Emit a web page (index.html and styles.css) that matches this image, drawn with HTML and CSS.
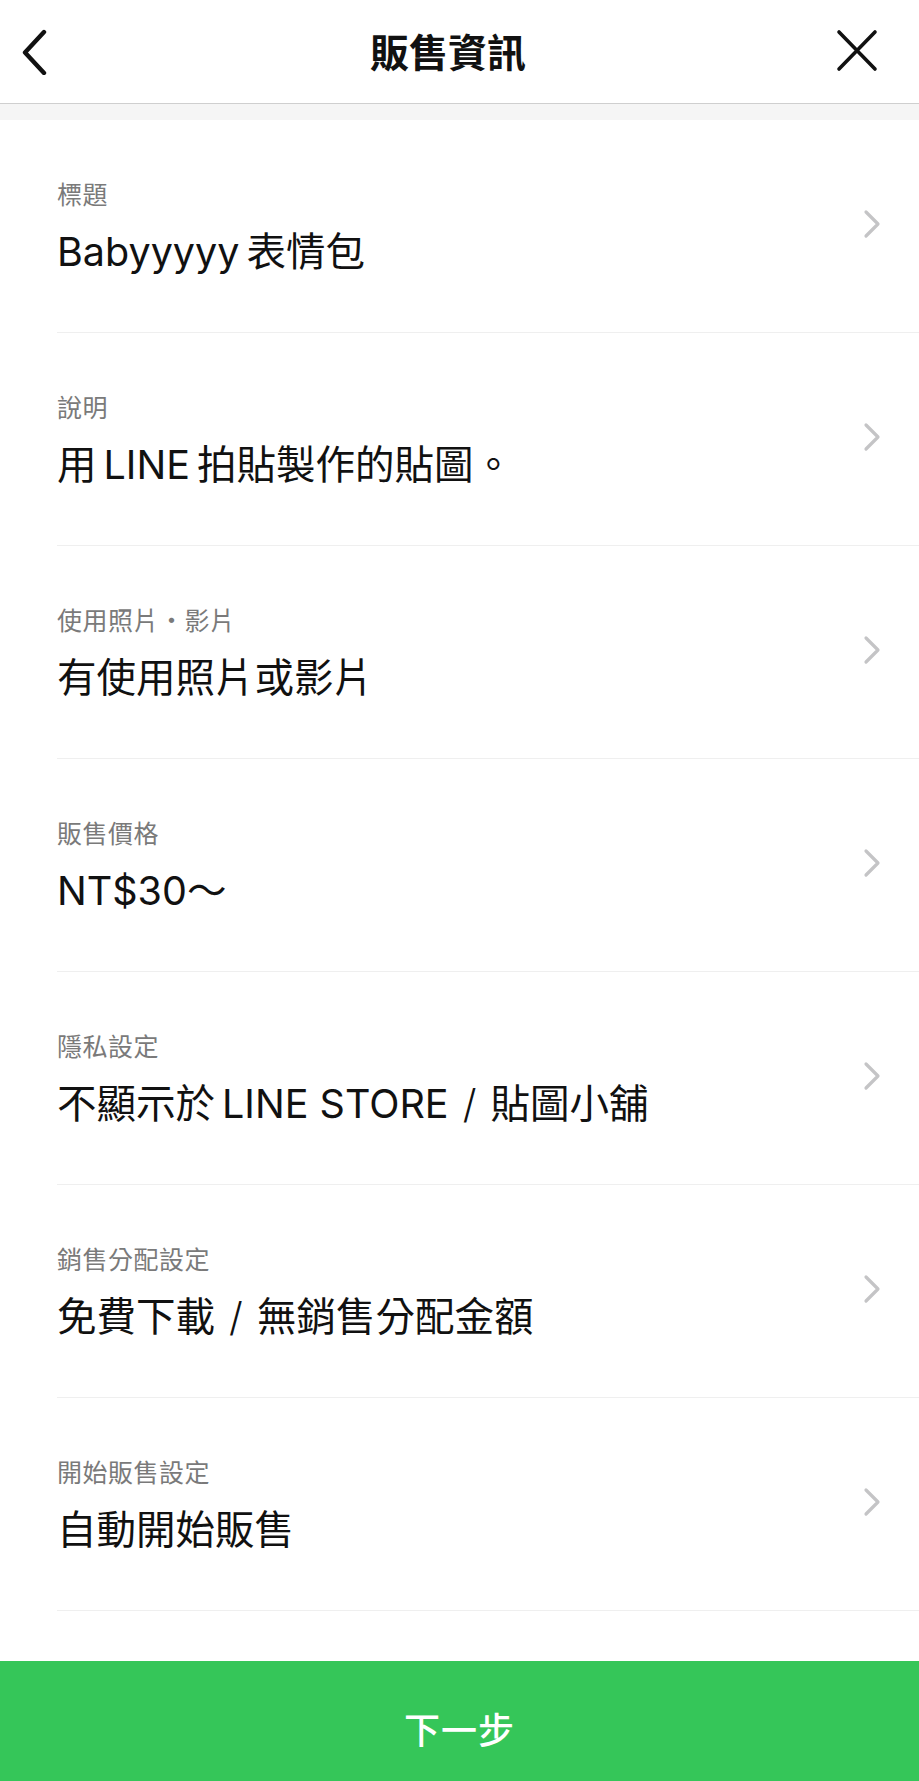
FILE: index.html
```html
<!DOCTYPE html>
<html lang="zh-Hant">
<head>
<meta charset="utf-8">
<title>販售資訊</title>
<link rel="stylesheet" href="styles.css">
</head>
<body>
<div class="page">
  <header class="topbar">
    <button class="icon-btn back" aria-label="返回">
      <svg width="36" height="48" viewBox="0 0 36 48"><path d="M27 5 L8 25.5 L27 46" fill="none" stroke="#111" stroke-width="4.4" stroke-linecap="round" stroke-linejoin="round"/></svg>
    </button>
    <h1 class="title">販售資訊</h1>
    <button class="icon-btn close" aria-label="關閉">
      <svg width="44" height="44" viewBox="0 0 44 44"><path d="M4 3 L40 40 M40 3 L4 40" fill="none" stroke="#111" stroke-width="3.6" stroke-linecap="round"/></svg>
    </button>
  </header>
  <div class="band"></div>
  <ul class="list">
    <li class="row"><div class="text"><div class="label">標題</div><div class="value">Babyyyyy<span class="gap"></span>表情包</div></div><svg class="chev" width="18" height="30" viewBox="0 0 18 30"><path d="M3 3 L15 15 L3 27" fill="none" stroke="#c4c4c6" stroke-width="3.2" stroke-linecap="round" stroke-linejoin="round"/></svg></li>
    <li class="row"><div class="text"><div class="label">說明</div><div class="value">用<span class="gap"></span>LINE<span class="gap"></span>拍貼製作的貼圖。</div></div><svg class="chev" width="18" height="30" viewBox="0 0 18 30"><path d="M3 3 L15 15 L3 27" fill="none" stroke="#c4c4c6" stroke-width="3.2" stroke-linecap="round" stroke-linejoin="round"/></svg></li>
    <li class="row"><div class="text"><div class="label">使用照片・影片</div><div class="value">有使用照片或影片</div></div><svg class="chev" width="18" height="30" viewBox="0 0 18 30"><path d="M3 3 L15 15 L3 27" fill="none" stroke="#c4c4c6" stroke-width="3.2" stroke-linecap="round" stroke-linejoin="round"/></svg></li>
    <li class="row"><div class="text"><div class="label">販售價格</div><div class="value">NT$30～</div></div><svg class="chev" width="18" height="30" viewBox="0 0 18 30"><path d="M3 3 L15 15 L3 27" fill="none" stroke="#c4c4c6" stroke-width="3.2" stroke-linecap="round" stroke-linejoin="round"/></svg></li>
    <li class="row"><div class="text"><div class="label">隱私設定</div><div class="value">不顯示於<span class="gap"></span>LINE STORE<span class="gap"></span><span class="slash">/</span><span class="gap"></span>貼圖小舖</div></div><svg class="chev" width="18" height="30" viewBox="0 0 18 30"><path d="M3 3 L15 15 L3 27" fill="none" stroke="#c4c4c6" stroke-width="3.2" stroke-linecap="round" stroke-linejoin="round"/></svg></li>
    <li class="row"><div class="text"><div class="label">銷售分配設定</div><div class="value">免費下載<span class="gap"></span><span class="slash">/</span><span class="gap"></span>無銷售分配金額</div></div><svg class="chev" width="18" height="30" viewBox="0 0 18 30"><path d="M3 3 L15 15 L3 27" fill="none" stroke="#c4c4c6" stroke-width="3.2" stroke-linecap="round" stroke-linejoin="round"/></svg></li>
    <li class="row"><div class="text"><div class="label">開始販售設定</div><div class="value">自動開始販售</div></div><svg class="chev" width="18" height="30" viewBox="0 0 18 30"><path d="M3 3 L15 15 L3 27" fill="none" stroke="#c4c4c6" stroke-width="3.2" stroke-linecap="round" stroke-linejoin="round"/></svg></li>
  </ul>
  <button class="next">下一步</button>
</div>
</body>
</html>
```

FILE: styles.css
```css
* { box-sizing: border-box; }
html, body { margin: 0; padding: 0; background: #fff; }
body {
  font-family: "Inter", "Noto Sans CJK TC", "Noto Sans", sans-serif;
  color: #111;
}
.page {
  min-height: 1781px;
  display: flex;
  flex-direction: column;
}
.topbar {
  height: 104px;
  border-bottom: 1px solid #cfcfcf;
  display: grid;
  grid-template-columns: 1fr auto 1fr;
  align-items: center;
  padding: 0 40px 0 17px;
}
.icon-btn {
  background: none;
  border: 0;
  padding: 0;
  display: flex;
  margin-top: -2px;
}
.close { justify-self: end; }
.title {
  margin: 0;
  font-family: "Noto Sans CJK TC", sans-serif;
  font-size: 39px;
  font-weight: 700;
  line-height: 1;
  margin-top: -2px;
}
.band {
  height: 16px;
  background: #f5f5f5;
}
.list {
  list-style: none;
  margin: 0;
  padding: 0;
}
.row {
  margin-left: 57px;
  height: 213px;
  border-bottom: 1px solid #efefef;
  display: flex;
  align-items: center;
  justify-content: space-between;
  padding-right: 38px;
}
.text {
  display: flex;
  flex-direction: column;
  gap: 15px;
  padding-top: 2px;
}
.label {
  font-size: 25px;
  line-height: 34px;
  color: #7a7a7a;
  letter-spacing: 0.5px;
}
.value {
  font-size: 39.5px;
  line-height: 50px;
  color: #111;
}
.gap {
  display: inline-block;
  width: 7px;
}
.slash {
  display: inline-block;
  width: 28px;
  text-align: center;
  font-weight: 300;
}
.chev {
  display: block;
  margin-top: -4px;
}
.next {
  margin-top: auto;
  height: 120px;
  width: 100%;
  border: 0;
  background: #35c659;
  color: #fff;
  font-family: "Noto Sans CJK TC", sans-serif;
  font-size: 36px;
  font-weight: 500;
  letter-spacing: 1px;
  padding-top: 14px;
}
```
